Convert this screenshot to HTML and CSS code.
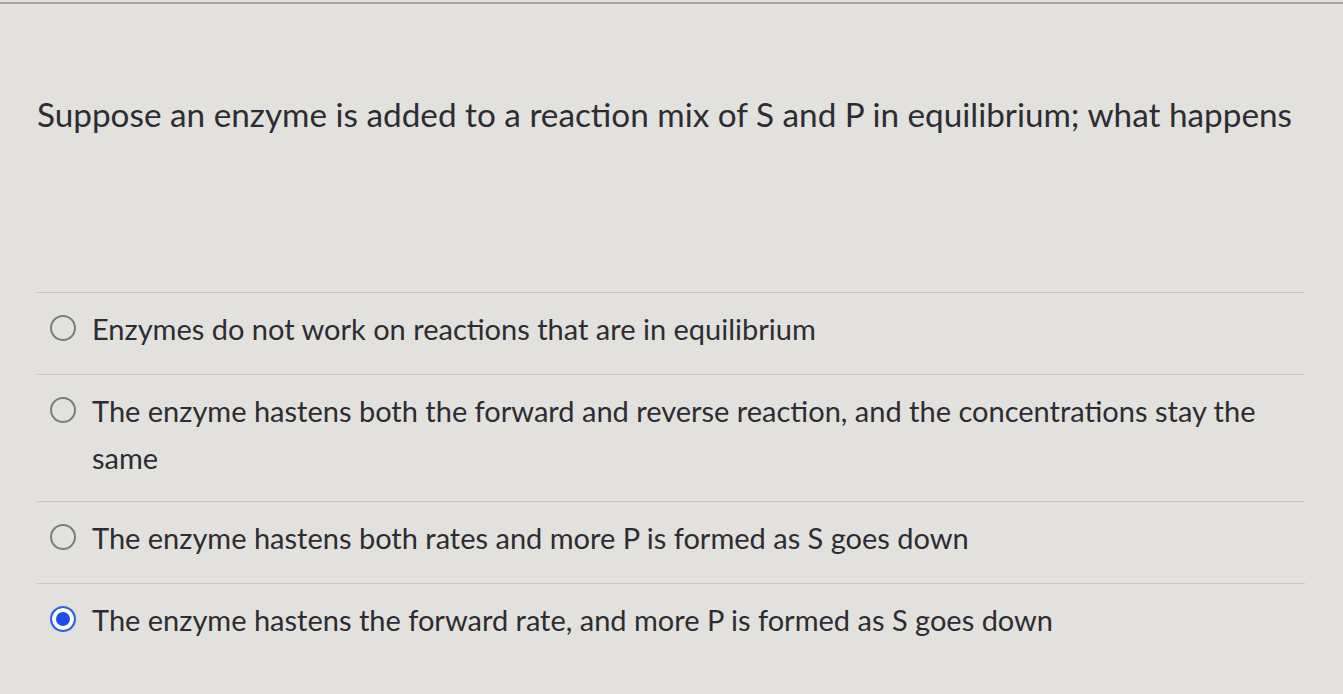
FILE: index.html
```html
<!DOCTYPE html>
<html>
<head>
<meta charset="utf-8">
<link rel="stylesheet" href="styles.css">
</head>
<body>
<div class="page">
  <div class="question">Suppose an enzyme is added to a reaction mix of S and P in equilibrium; what happens</div>
  <ul class="answers">
    <li class="answer"><span class="radio"></span><span class="label">Enzymes do not work on reactions that are in equilibrium</span></li>
    <li class="answer"><span class="radio"></span><span class="label">The enzyme hastens both the forward and reverse reaction, and the concentrations stay the same</span></li>
    <li class="answer"><span class="radio"></span><span class="label">The enzyme hastens both rates and more P is formed as S goes down</span></li>
    <li class="answer"><span class="radio checked"></span><span class="label">The enzyme hastens the forward rate, and more P is formed as S goes down</span></li>
  </ul>
</div>
</body>
</html>
```
FILE: styles.css
```css
html, body {
  margin: 0;
  padding: 0;
  height: 100%;
}
body {
  background: #e2e1dd;
  font-family: Lato, "Open Sans", sans-serif;
  color: #2e2c33;
  overflow: hidden;
}
.page {
  border-top: 2px solid #a9a8a5;
  margin-top: 2px;
  padding: 0 38px 0 37px;
}
.question {
  font-size: 33.3px;
  line-height: 40px;
  padding-top: 90px;
  padding-bottom: 158px;
  white-space: nowrap;
}
.answers {
  list-style: none;
  margin: 0;
  padding: 0;
}
.answer {
  display: flex;
  align-items: flex-start;
  border-top: 1px solid #c9c7c3;
  padding: 12px 40px 22px 0;
  font-size: 29px;
  line-height: 47px;
}
.answer:nth-child(2) {
  padding-bottom: 20px;
}
.radio {
  flex: none;
  width: 22px;
  height: 22px;
  border: 2px solid #7d7c7c;
  border-radius: 50%;
  margin: 10px 16px 0 13px;
  box-sizing: content-box;
  background: transparent;
}
.radio.checked {
  border: 2px solid #2f62e6;
  background: #1c4fe8;
  box-shadow: inset 0 0 0 4px #ffffff;
}
.label {
  flex: 1;
}
```
